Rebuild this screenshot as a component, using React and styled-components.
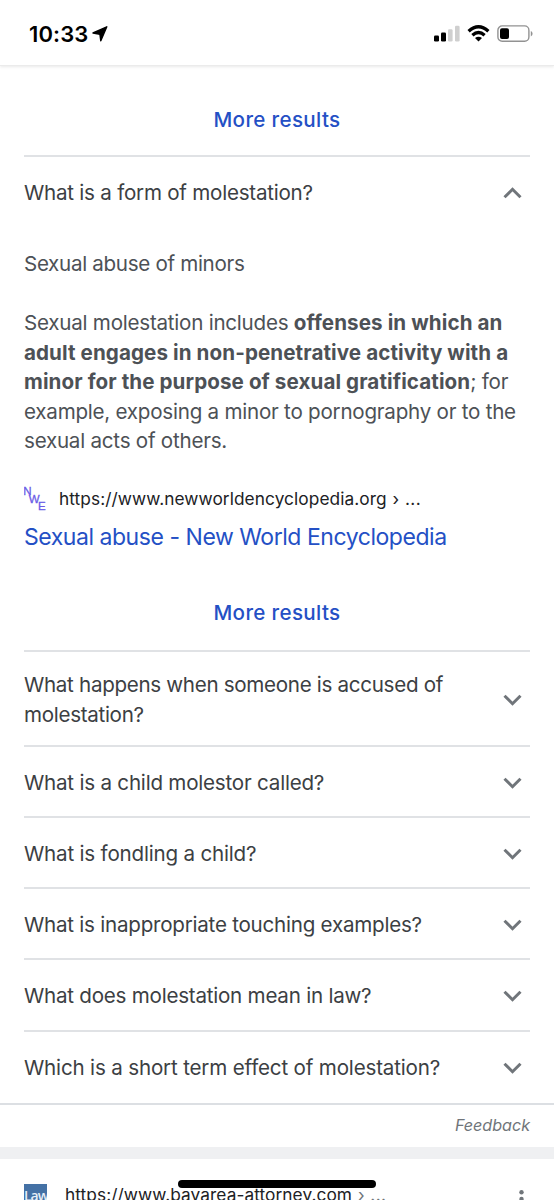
import React from 'react'
import styled, { createGlobalStyle } from 'styled-components'

const GlobalStyle = createGlobalStyle`
* {
box-sizing: border-box;
}
body {
margin: 0;
background-color: #fff;
font-family: Inter, 'Liberation Sans', sans-serif;
}
`
const Container = styled.div`
position: relative;
width: 554px;
height: 1200px;
overflow: hidden;
background-color: #fff;
`
const StatusBar = styled.div`
display: flex;
align-items: center;
justify-content: space-between;
height: 66px;
padding: 2px 21px 0 29px;
border-bottom: 1px solid #ebebeb;
box-shadow: 0 1px 3px rgba(0,0,0,0.09);
`
const Clock = styled.div`
display: flex;
align-items: center;
gap: 4px;
font-size: 22px;
font-weight: 600;
letter-spacing: 0.1px;
color: #000;
`
const StatusIcons = styled.div`
display: flex;
align-items: center;
gap: 7px;
`
const MoreResults = styled.div`
display: flex;
justify-content: center;
height: ${props=>props.height};
padding-top: ${props=>props.top};
font-size: 20.6px;
line-height: 30px;
font-weight: 500;
letter-spacing: 0.34px;
color: #2450c5;
`
const List = styled.div`
padding: 0 24px;
`
const Question = styled.div`
display: flex;
align-items: center;
justify-content: space-between;
height: ${props=>props.height || '71px'};
padding: ${props=>props.top || '2px'} 7px 0 0;
border-top: 2px solid #e0e2e5;
font-size: 20.6px;
line-height: 29.5px;
color: #3c4043;
`
const QuestionText = styled.div`
width: 440px;
letter-spacing: ${props=>props.spacing || '-0.24px'};
`
const Answer = styled.div`
height: 422px;
padding-top: 21px;
color: #4d5156;
`
const AnswerText = styled.p`
margin: 0 0 29.5px;
font-size: 20.6px;
line-height: 29.5px;
letter-spacing: ${props=>props.spacing || '-0.24px'};
`
const Line = styled.span`
display: block;
white-space: nowrap;
`
const Bold = styled.b`
letter-spacing: 0.09px;
`
const Source = styled.div`
display: flex;
align-items: center;
height: 26px;
margin-top: 29px;
gap: 13px;
`
const Url = styled.span`
font-size: 17.3px;
letter-spacing: 0.07px;
white-space: nowrap;
color: #202124;
`
const Crumb = styled.span`
margin-left: 1px;
letter-spacing: 0.4px;
color: ${props=>props.color || '#202124'};
`
const ResultTitle = styled.div`
margin-top: 9px;
font-size: 23px;
line-height: 34px;
letter-spacing: -0.46px;
white-space: nowrap;
color: #2450c5;
`
const FeedbackBar = styled.div`
display: flex;
align-items: center;
justify-content: flex-end;
height: 44px;
padding: 0 24px 2px 0;
border-top: 2px solid #dcdfe3;
font-size: 16.2px;
font-style: italic;
letter-spacing: -0.05px;
color: #70757a;
`
const Divider = styled.div`
height: 12px;
background-color: #eff0f2;
`
const NextResult = styled.div`
display: flex;
align-items: flex-start;
justify-content: space-between;
padding: 24px 29px 0 24px;
`
const NextSource = styled.div`
display: flex;
align-items: flex-start;
gap: 18px;
padding-top: 1px;
`
const Favicon = styled.svg`
display: block;
flex: none;
`
const HomeIndicator = styled.div`
position: absolute;
left: 178px;
top: 1180px;
width: 198px;
height: 8px;
border-radius: 4px;
background-color: #000;
`

const questions = [
    { text: 'What is a child molestor called?', spacing: '-0.22px' },
    { text: 'What is fondling a child?', spacing: '-0.2px' },
    { text: 'What is inappropriate touching examples?' },
    { text: 'What does molestation mean in law?', height: '72px' },
    { text: 'Which is a short term effect of molestation?', spacing: '-0.18px', height: '73px', top: '0px' },
]

function Chevron({ up }) {
    return (
        <svg width='21' height='14' viewBox='0 0 21 14' fill='none' stroke='#70757a' strokeWidth='3'>
            <path d={up ? 'M2.5 11.3L10.5 3.3L18.5 11.3' : 'M2.5 2.7L10.5 10.7L18.5 2.7'} />
        </svg>
    )
}

export default function App() {
    return (
        <Container>
            <GlobalStyle />
            <StatusBar>
                <Clock>
                    10:33
                    <svg width='16' height='16' viewBox='0 0 16 16'>
                        <path d='M14.8 0.8L8.8 14.8L7.9 8.2L1 7Z' fill='#000' stroke='#000' strokeWidth='1.4' strokeLinejoin='round' />
                    </svg>
                </Clock>
                <StatusIcons>
                    <svg width='26' height='17' viewBox='0 0 26 17'>
                        <rect x='0' y='10.5' width='5' height='6' rx='1.3' fill='#000' />
                        <rect x='7' y='7.5' width='5' height='9' rx='1.3' fill='#000' />
                        <rect x='14' y='4.2' width='4.6' height='12.3' rx='1.3' fill='#cfcfcf' />
                        <rect x='21' y='0.7' width='4.6' height='15.8' rx='1.3' fill='#cfcfcf' />
                    </svg>
                    <svg width='23' height='17' viewBox='0 0 23 17' fill='none' stroke='#000' strokeWidth='3.3'>
                        <path d='M1.6 6.3Q11.5 -2.7 21.4 6.3' />
                        <path d='M5.4 10.2Q11.5 4.8 17.6 10.2' />
                        <path d='M8 13Q11.5 10.4 15 13L11.5 16.4Z' fill='#000' stroke='none' />
                    </svg>
                    <svg width='36' height='17' viewBox='0 0 36 17'>
                        <rect x='0.9' y='0.9' width='31' height='15.4' rx='4.3' fill='none' stroke='#929292' strokeWidth='1.4' />
                        <rect x='3' y='3.2' width='9' height='10.8' rx='2' fill='#000' />
                        <path d='M33.8 6V11.4Q35.6 10.6 35.6 8.7Q35.6 6.8 33.8 6Z' fill='#929292' />
                    </svg>
                </StatusIcons>
            </StatusBar>
            <MoreResults height='89px' top='38.5px'>More results</MoreResults>
            <List>
                <Question height='73px' top='0px'>
                    <QuestionText>What is a form of molestation?</QuestionText>
                    <Chevron up />
                </Question>
                <Answer>
                    <AnswerText spacing='-0.32px'>Sexual abuse of minors</AnswerText>
                    <AnswerText>
                        <Line>Sexual molestation includes <Bold>offenses in which an</Bold></Line>
                        <Line><Bold>adult engages in non-penetrative activity with a</Bold></Line>
                        <Line><Bold>minor for the purpose of sexual gratification</Bold>; for</Line>
                        <Line>example, exposing a minor to pornography or to the</Line>
                        <Line>sexual acts of others.</Line>
                    </AnswerText>
                    <Source>
                        <Favicon width='22' height='26' viewBox='0 0 22 26' fill='#6a5be6' stroke='#6a5be6' strokeWidth='0.3' fontFamily='Liberation Sans' fontSize='11.5'>
                            <text x='-0.8' y='9.5'>N</text>
                            <text x='4.8' y='18.3'>W</text>
                            <text x='14' y='24.8'>E</text>
                        </Favicon>
                        <Url>https://www.newworldencyclopedia.org <Crumb>› ...</Crumb></Url>
                    </Source>
                    <ResultTitle>Sexual abuse - New World Encyclopedia</ResultTitle>
                    <MoreResults height='80px' top='44px'>More results</MoreResults>
                </Answer>
                <Question height='95px'>
                    <QuestionText spacing='-0.31px'>What happens when someone is accused of molestation?</QuestionText>
                    <Chevron />
                </Question>
                {questions.map(q => (
                    <Question key={q.text} height={q.height} top={q.top}>
                        <QuestionText spacing={q.spacing}>{q.text}</QuestionText>
                        <Chevron />
                    </Question>
                ))}
            </List>
            <FeedbackBar>Feedback</FeedbackBar>
            <Divider />
            <NextResult>
                <NextSource>
                    <Favicon width='23' height='23' viewBox='0 0 23 23'>
                        <rect width='23' height='23' fill='#4471a5' />
                        <text x='0' y='16.5' fill='#e6eef7' fontFamily='Open Sans' fontWeight='600' fontSize='14' letterSpacing='-1'>Law</text>
                    </Favicon>
                    <Url>https://www.bayarea-attorney.com <Crumb color='#70757a'>› ...</Crumb></Url>
                </NextSource>
                <svg width='7' height='24' viewBox='0 0 7 24' fill='#70757a'>
                    <circle cx='3.5' cy='9.3' r='2.2' />
                    <circle cx='3.5' cy='16' r='2.2' />
                    <circle cx='3.5' cy='22.5' r='2.2' />
                </svg>
            </NextResult>
            <HomeIndicator />
        </Container>
    )
}
